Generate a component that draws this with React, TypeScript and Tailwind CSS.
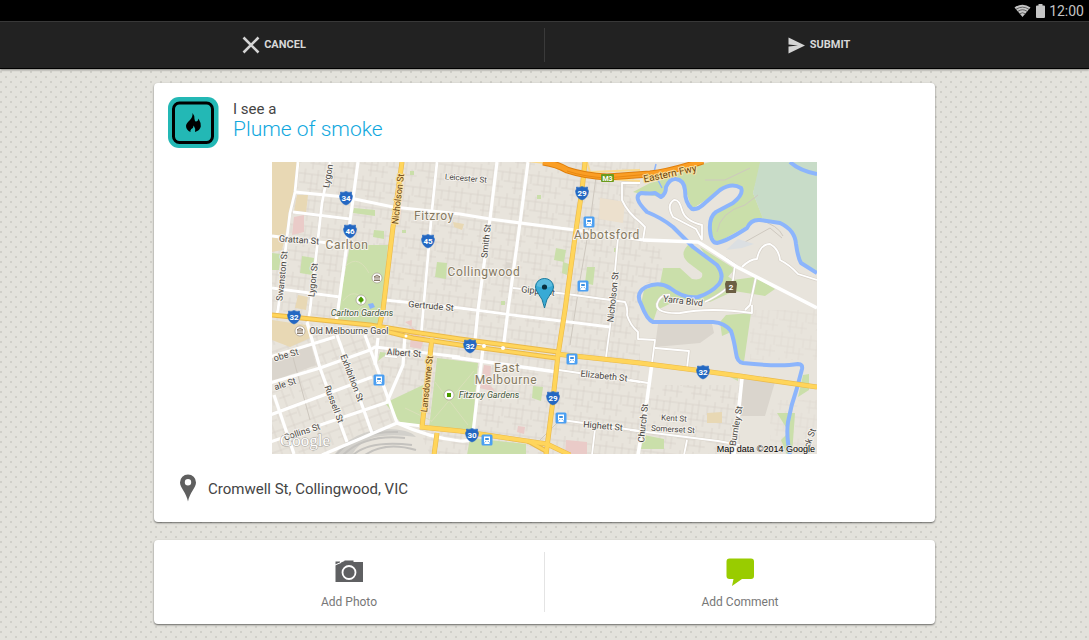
import React from 'react';

type Pt = [number, number];

const MINOR_ROADS = [
  'M293 212L350 219', 'M272 236L320 242L345 245', 'M272 288L340 297', 'M298 162L295 192L290 213L278 310L276 316',
  'M330 162L322 203L310 310L308 322', 'M437 162L432 210L421 336', 'M385 300L460 308L520 316L610 327',
];

const MAIN_ROADS = [
  'M358 162L338 310L336 322', 'M295 192L345 197L393 207L460 214L490 219L575 230L643 240',
  'M497 162L490 219L478 310L475 340L483 348L473 433', 'M528 162L520 223L508 310L503 350',
];

const SMALL_ROADS = [
  'M618 238L613 293L610 327L606 357', 'M513 288L567 294L625 302Q628 308 627 315Q630 325 638 332V339L655 340L652 363',
  'M640 183H622V200Q628 213 640 222L645 227L643 240', 'M655 348L689 351L687 368', 'M559 370L640 382',
  'M562 420L640 431', 'M595 429L592 455', 'M630 430L718 441L740 445', 'M687 440L684 455', 'M630 380L648 383',
  'M752 305V313Q710 307 680 313Q656 314 657 304Q660 294 670 295', 'M745 310L750 305L756 277',
  'M742 267Q750 259 757 259Q760 244 770 244Q779 249 780 260Q790 265 798 274L817 280',
  'M702 240V225Q685 221 682 210Q679 199 674 200Q666 205 673 217L696 229L702 240', 'M725 258L735 265L733 280Q728 291 705 302',
  'M385 356L397 357',
];

const CITY_ROADS = [
  'M270 357L335 337', 'M270 383L320 368L370 350L375 347L460 357', 'M270 415L372 377', 'M270 442L388 402',
  'M322 455L397 423L422 426', 'M307 322L320 368L347 442', 'M337 335L372 433', 'M365 335L376 365L397 423',
  'M274 395L294 454', 'M405 335L403 365L387 402', 'M378 338L375 365', 'M397 423Q430 438 460 441Q473 442 475 434',
];

const SHIELDS: { x: number; y: number; n: string }[] = [
  { x: 346, y: 198, n: '34' }, { x: 350, y: 231, n: '46' }, { x: 428, y: 241, n: '45' }, { x: 582, y: 193, n: '29' },
  { x: 294, y: 317, n: '32' }, { x: 470, y: 346, n: '32' }, { x: 553, y: 398, n: '29' }, { x: 472, y: 435, n: '30' },
  { x: 703, y: 372, n: '32' },
];

const STATIONS: Pt[] = [[589, 222], [583, 286], [572, 359], [561, 418], [487, 440], [379, 380]];

const STREETS: { x: number; y: number; r: number; t: string; s?: number; brown?: boolean }[] = [
  { x: 328, y: 176, r: -80, t: 'Lygon' }, { x: 398, y: 199, r: -83, t: 'Nicholson St', brown: true },
  { x: 466, y: 178, r: 5, t: 'Leicester St', s: 8 }, { x: 299, y: 240, r: 4, t: 'Grattan St' },
  { x: 282, y: 276, r: -84, t: 'Swanston St' }, { x: 313, y: 280, r: -84, t: 'Lygon St' },
  { x: 486, y: 241, r: -84, t: 'Smith St' }, { x: 431, y: 306, r: 5, t: 'Gertrude St' },
  { x: 538, y: 291, r: 6, t: 'Gipps St' }, { x: 613, y: 297, r: -84, t: 'Nicholson St' },
  { x: 670, y: 174, r: -12, t: 'Eastern Fwy', brown: true, s: 10 }, { x: 683, y: 301, r: 7, t: 'Yarra Blvd' },
  { x: 286, y: 355, r: -16, t: 'obe St' }, { x: 285, y: 384, r: -18, t: 'ale St' }, { x: 302, y: 432, r: -18, t: 'Collins St' },
  { x: 352, y: 378, r: 69, t: 'Exhibition St' }, { x: 334, y: 404, r: 69, t: 'Russell St' },
  { x: 404, y: 353, r: 4, t: 'Albert St' }, { x: 427, y: 384, r: -84, t: 'Lansdowne St', brown: true },
  { x: 604, y: 376, r: 6, t: 'Elizabeth St' }, { x: 603, y: 426, r: 5, t: 'Highett St' },
  { x: 643, y: 423, r: -84, t: 'Church St' }, { x: 736, y: 426, r: -80, t: 'Burnley St' },
  { x: 674, y: 418, r: 3, t: 'Kent St', s: 8 }, { x: 673, y: 429, r: 3, t: 'Somerset St', s: 8 },
  { x: 810, y: 438, r: -70, t: 'ck St' },
];

const SUBURBS: { x: number; y: number; t: string }[] = [
  { x: 434, y: 220, t: 'Fitzroy' }, { x: 347, y: 249, t: 'Carlton' }, { x: 607, y: 239, t: 'Abbotsford' },
  { x: 484, y: 276, t: 'Collingwood' }, { x: 507, y: 372, t: 'East' }, { x: 506, y: 384, t: 'Melbourne' },
];

const RIVER =
  'M790 455Q786 435 788 422Q791 405 797 388L802 369Q803 364 798 364Q780 367 743 363Q737 362 736 353Q734 340 731 331Q725 323 713 322L653 322Q647 320 641 304Q635 293 646 287Q659 281 670 288Q684 299 698 297Q711 293 719 284Q725 276 717 265L693 247L673 227Q662 218 647 212Q632 197 641 193Q651 194 655 193L661 197Q666 194 666 187Q670 178 676 179Q684 180 685 190Q685 203 692 209Q698 210 705 203L720 190Q732 182 741 188Q744 194 733 203L716 212Q709 217 710 230Q711 243 717 243Q727 241 747 228Q751 219 760 220L780 223Q795 230 796 244Q798 258 801 263L817 273';

function Lines({ paths, width, color = '#fff' }: { paths: string[]; width: number; color?: string }) {
  return (
    <g fill="none" stroke={color} strokeWidth={width} strokeLinejoin="round">
      {paths.map((d) => <path key={d} d={d} />)}
    </g>
  );
}

function CityMap() {
  return (
    <svg viewBox="272 162 545 292" role="img" aria-label="Map of Collingwood" className="block h-auto w-full font-[Roboto,sans-serif]">
      <defs>
        <pattern id="lanes" width="29" height="26" patternUnits="userSpaceOnUse" patternTransform="rotate(7)">
          <path d="M0 5H29M0 14H18M9 20H29M5 0V14M12 5V26M18 0V20M24 14V26M27 5V14" fill="none" stroke="#d8d2ca" strokeWidth="0.8" />
        </pattern>
        <pattern id="cityLanes" width="21" height="19" patternUnits="userSpaceOnUse" patternTransform="rotate(-20)">
          <path d="M0 6H21M0 14H12M5 0V19M14 6V19" fill="none" stroke="#d8d2ca" strokeWidth="0.8" />
        </pattern>
      </defs>
      <rect x="272" y="162" width="545" height="293" fill="#e8e4dc" />
      <path d="M272 162H640V186L625 190L640 212V385H272Z" fill="url(#lanes)" />
      <path d="M400 385H740V455H430Z" fill="url(#lanes)" />
      <path d="M640 240L662 250V280L640 285Z" fill="url(#lanes)" />
      <path d="M750 310H817V360H750ZM770 400H817V455H770Z" fill="url(#lanes)" opacity="0.5" />
      <path d="M272 320L370 328L397 423L322 455H272Z" fill="#e8e4dc" />
      <path d="M272 320L370 328L397 423L322 455H272Z" fill="url(#cityLanes)" />

      <g fill="#e8d8b4">
        <path d="M272 162H300L295 192L290 213L282 250L272 252ZM297 195H308L306 213L294 211Z" />
        <path d="M272 320L306 325L310 338L290 347L272 340ZM298 295L308 297L306 310L295 308Z" />
        <path d="M707 413L722 412V423H707ZM453 222L464 224L462 230L454 227Z" />
      </g>
      <path d="M600 198L625 202L623 223L599 219Z" fill="#ece0cd" />
      <path d="M294 217L304 215V232L292 235ZM405 322L412 320L410 347L421 349L425 336ZM484 365L491 366L490 385L496 392L480 388ZM462 342L478 345V350L463 349ZM566 440L587 442V455H565ZM518 426L525 427L524 434L517 432Z" fill="#eacbc8" />
      <path d="M658 324L712 324L714 333L700 343L655 347ZM742 378L775 382L765 416L741 416ZM272 357L311 345L316 365L284 377L272 380ZM506 262L512 263L510 280L504 278Z" fill="#dad5cd" />

      <path d="M633 192L650 183L662 180L702 164L710 162H762L753 193L763 218Q750 222 745 227L717 243L710 232L713 215L741 197V186H728L692 209L683 182L672 179L661 197L641 194Z" fill="#cadfaa" />
      <path d="M713 215L741 194V188L728 186L692 209L702 226V240L712 247L710 230Z" fill="#e8e4dc" />
      <path d="M760 162H817V273L801 263L796 240Q792 227 780 223L763 219L753 193Z" fill="#c8dcc8" />
      <path d="M692 246L722 272L733 280L755 277L775 289L765 296L734 291L710 302L680 299L657 310L653 322L641 304L644 290L660 284L663 268L680 268L692 279Q704 281 702 273L690 264Q678 255 688 245ZM700 247L735 269L724 281L706 256Z" fill="#cadfaa" />
      <path d="M726 315L751 313L744 362L736 356L731 332L722 336L720 322ZM803 375L809 374V390L798 397ZM777 413H795L792 455H787L781 440L789 432ZM730 377H738V381ZM644 435L664 439V449H641Z" fill="#cadfaa" />
      <g fill="#cadfaa">
        <path d="M350 245L388 245L382 310L378 328L337 322L339 305Z" />
        <path d="M437 358L478 363L472 432L429 428ZM385 403L423 385L420 425L400 422ZM470 438L526 444V455H467ZM380 352L388 353L378 361Z" />
        <path d="M354 208L375 210V216L353 213ZM374 230L384 231V239L373 237ZM302 256L314 258L312 275L300 273ZM272 253L281 254L279 270H272ZM437 262L447 263L446 279L435 277Z" />
        <path d="M556 248L566 250L564 262L554 260ZM587 267H595L593 285L585 283ZM563 262L569 264L567 275L562 273ZM533 386L543 387L541 401L532 398ZM410 171h4v4h-4zM537 195h4v4h-4zM402 230h4v3h-4zM501 301h4v4h-4zM614 248h3v4h-3z" />
      </g>
      <path d="M341 272Q356 250 369 273M343 301Q354 286 366 302L350 318M431 422L474 371M435 382L468 425M405 408L432 421" fill="none" stroke="#d9dfb9" strokeWidth="1" />
      <path d="M368 304l5-1 2 4-5 2z" fill="#8ab4f8" />
      <path d="M334 455Q352 431 385 429Q410 429 416 437Q390 433 372 438Q358 443 352 455Z" fill="#d2d0cb" />
      <path d="M336 455Q356 431 398 432M343 455Q365 434 405 438M353 455Q370 440 412 445M365 455Q385 441 416 450" fill="none" stroke="#c4c2be" strokeWidth="2" />
      <path d="M596 177L590 222L579 286L570 345M565 415L540 440M291 350L310 420M745 242L770 228L782 238M705 180L725 180L750 168M717 232Q720 212 745 205L758 195M759 220Q778 225 783 236" fill="none" stroke="#cec8bf" strokeWidth="1" />
      <path d="M726 250L738 239L754 244L742 248Z" fill="#dbdfe2" />

      <path d={RIVER} fill="none" stroke="#8cb5fc" strokeWidth="4" strokeLinejoin="round" />
      <path d="M790 162Q800 171 817 174" fill="none" stroke="#8cb5fc" strokeWidth="4" />
      <path d="M656 164L654 172L662 188" fill="none" stroke="#8cb5fc" strokeWidth="1.5" />

      <Lines paths={[...SMALL_ROADS, ...MINOR_ROADS]} width={3} color="#d8d2c9" />
      <Lines paths={SMALL_ROADS} width={1.8} />
      <Lines paths={MINOR_ROADS} width={2.8} />
      <Lines paths={[...MAIN_ROADS, ...CITY_ROADS]} width={3.2} />
      <Lines paths={['M643 240L698 242Q710 249 737 267L817 308', 'M452 357L557 372', 'M652 363L647 400L638 455', 'M742 378L734 455']} width={3.6} />

      <Lines paths={['M528 161L545 163L560 169', 'M587 162L590 172L640 170', 'M594 178L640 181']} width={2} color="#fbd98a" />
      <Lines paths={['M402 162L393 227L383 310L378 332', 'M585 162L582 190L576 230L565 310L558 355L552 408L546 455', 'M432 338L422 427', 'M272 315L370 325L413 332L460 339L558 352', 'M385 331L413 338L460 345L556 358', 'M556 354L640 363L703 371L740 376L817 387', 'M420 427L460 431L547 444L570 455', 'M437 433L434 455', 'M528 441L546 451']} width={5} color="#eab94a" />
      <Lines paths={['M402 162L393 227L383 310L378 332', 'M585 162L582 190L576 230L565 310L558 355L552 408L546 455', 'M432 338L422 427', 'M420 427L460 431L547 444L570 455', 'M556 354L640 363L703 371L740 376L817 387', 'M437 433L434 455']} width={3.8} color="#ffd55b" />
      <Lines paths={['M272 315L370 325L413 332L460 339L558 352', 'M385 331L413 338L460 345L556 358', 'M528 441L546 451']} width={3} color="#ffd55b" />
      <path d="M543 162Q557 164 567 170Q585 176 607 177L650 174Q670 172 703 161" fill="none" stroke="#e07f0b" strokeWidth="7" />
      <path d="M543 162Q557 164 567 170Q585 176 607 177L650 174Q670 172 703 161" fill="none" stroke="#fa9e25" strokeWidth="5" />
      <path d="M567 171Q585 177 607 178L650 174" fill="none" stroke="#e98913" strokeWidth="1" />
      <g fill="#fff"><circle cx="484" cy="346" r="2" /><circle cx="503" cy="348" r="2" /><circle cx="406" cy="336" r="1.5" /></g>

      <g textAnchor="middle" stroke="#f6f3ee" strokeWidth="2" strokeLinejoin="round" paintOrder="stroke">
        {STREETS.map((s, i) => (
          <text key={i} transform={`translate(${s.x} ${s.y}) rotate(${s.r})`} dy="3" fontSize={s.s ?? 9} fill={s.brown ? '#6b4510' : '#494744'} stroke={s.brown ? '#fbe09a' : '#f6f3ee'}>
            {s.t}
          </text>
        ))}
        {SUBURBS.map((s) => (
          <text key={s.t} x={s.x} y={s.y} fontSize="12" className="tracking-wider" fill="#84785f">{s.t}</text>
        ))}
        <text x="362" y="316" fontSize="9" fontStyle="italic" fill="#42573b">Carlton Gardens</text>
        <text x="489" y="398" fontSize="9" fontStyle="italic" fill="#42573b">Fitzroy Gardens</text>
        <text x="349" y="334" fontSize="9" fill="#494744">Old Melbourne Gaol</text>
      </g>

      {SHIELDS.map((s, i) => (
        <g key={i} transform={`translate(${s.x} ${s.y})`}>
          <path d="M-5.5 -6Q-3 -5 0 -6.5Q3 -5 5.5 -6Q5 -4 6.5 -2Q6 5 0 7Q-6 5 -6.5 -2Q-5 -4 -5.5 -6Z" fill="#2468c2" stroke="#2468c2" strokeWidth="0.6" />
          <text y="2.8" fontSize="8" fontWeight="700" textAnchor="middle" fill="#fff">{s.n}</text>
        </g>
      ))}
      {STATIONS.map(([x, y], i) => (
        <g key={i} transform={`translate(${x} ${y})`}>
          <rect x="-5.5" y="-5.5" width="11" height="11" rx="1.5" fill="#4b9ff2" />
          <path d="M-3 -3.5H3V2.500H-3ZM-3 4L-1.800 2.500H1.800L3 4Z" fill="#fff" />
          <path d="M-1.800 -2H1.800V0H-1.800ZM-1.800 1h1v.8h-1zM.8 1h1v.8h-1z" fill="#3c8fe0" />
        </g>
      ))}
      <rect x="601" y="174" width="13" height="8" rx="1" fill="#6b9b1c" />
      <text x="607.5" y="180.7" fontSize="7" fontWeight="700" textAnchor="middle" fill="#fff">M3</text>
      <path d="M726 281H736L737 284L736 293H726L725 284Z" fill="#6b5e43" />
      <text x="731" y="290" fontSize="8" fontWeight="700" textAnchor="middle" fill="#fff">2</text>

      <g fill="#fff" stroke="#a49a8c" strokeWidth="0.7">
        <circle cx="377" cy="278" r="5" /><circle cx="300" cy="331" r="5" /><circle cx="361" cy="300" r="5" /><circle cx="449" cy="395" r="5" />
      </g>
      <path d="M374 277L377 275L380 277ZM374 280.5H380M375 277.5V280M377 277.5V280M379 277.5V280M297 330L300 328L303 330ZM297 333.5H303M298 330.5V333M300 330.5V333M302 330.5V333" fill="none" stroke="#6b5640" strokeWidth="0.8" />
      <path d="M361 296.500Q356 301 360.500 302V303.500H361.500V302Q366 301 361 296.500ZM447 393h4v4h-4z" fill="#4a9a00" />

      <g>
        <path d="M544.500 308Q543 299 538 293Q535.500 290 535.500 287A9 8.500 0 0 1 553.500 287Q553.500 290 551 293Q546 299 544.500 308Z" fill="#38aad5" stroke="#17789c" strokeWidth="1" />
        <path d="M536.500 286A8 7 0 0 1 552.500 286Q545 289 536.500 286Z" fill="#7dcdea" opacity="0.5" />
        <circle cx="544.500" cy="287" r="2.600" fill="#09303f" />
      </g>
      <text x="280" y="446" fontSize="17" fontFamily="Liberation Serif, serif" fill="#fff" stroke="#aaa69f" strokeWidth="1" paintOrder="stroke">Google</text>
      <text x="815" y="452" fontSize="9" textAnchor="end" fontFamily="Liberation Sans, sans-serif" fill="#000" stroke="#eeeae4" strokeWidth="1.5" paintOrder="stroke">Map data ©2014 Google</text>
    </svg>
  );
}

function StatusBar() {
  return (
    <div className="flex h-[21px] items-center justify-end bg-black pr-[5px] text-[#c4c4c4]">
      <svg viewBox="0 0 17 13" className="mr-[5px] h-[13px] w-[17px]" aria-hidden="true">
        <path d="M8.500 13L0.500 3.500Q8.500 -2 16.500 3.500Z" fill="currentColor" />
        <path d="M2 5.300Q8.500 1 15 5.300M3.600 7.500Q8.500 4 13.400 7.500M5.500 9.800Q8.500 7.700 11.500 9.800" fill="none" stroke="#333" strokeWidth="0.7" />
      </svg>
      <svg viewBox="0 0 9 14" className="mr-1 h-[14px] w-[9px]" aria-hidden="true">
        <path d="M2.500 0H6.500V1.500H8Q9 1.500 9 2.500V13Q9 14 8 14H1Q0 14 0 13V2.500Q0 1.500 1 1.500H2.500Z" fill="currentColor" />
      </svg>
      <span className="text-[14px] leading-5">12:00</span>
    </div>
  );
}

function ActionBar() {
  const button = 'flex flex-1 items-center justify-center pl-1 text-[11px] font-bold leading-4 text-[#d8d8d8]';
  return (
    <header className="flex h-12 border-t border-b border-t-[#383838] border-b-black bg-[#222] shadow-[0_1px_2px_rgba(0,0,0,0.4)]">
      <button type="button" className={button}>
        <svg viewBox="0 0 18 18" className="mr-1 size-[18px]" aria-hidden="true">
          <path d="M1.500 1.500L16.500 16.500M16.500 1.500L1.500 16.500" stroke="#d4d4d4" strokeWidth="2.600" />
        </svg>
        CANCEL
      </button>
      <span className="my-[6px] w-px bg-[#3a3a3a]" />
      <button type="button" className={button}>
        <svg viewBox="0 0 17 17" className="mr-[5px] size-[17px]" aria-hidden="true">
          <path d="M0.500 0.500L17 8.500L0.500 16.500V9.500L10 8.500L0.500 7.500Z" fill="#d4d4d4" />
        </svg>
        SUBMIT
      </button>
    </header>
  );
}

function HazardIcon() {
  return (
    <svg viewBox="0 0 51 51" className="size-[51px] shrink-0" aria-hidden="true">
      <rect width="50.500" height="51" rx="11" fill="#23b8b5" />
      <rect x="5.500" y="6" width="39" height="39.500" rx="6" fill="#23b8b5" stroke="#000" strokeWidth="3" />
      <path d="M24.500 16Q26.700 18.500 26.500 22Q27 25 28 24.500Q30 24.500 30.500 21.500Q33 25.500 32.800 29.500Q32 33.500 27 35Q27.800 31.500 25.700 28.500Q25.500 31 23.300 32Q22 33.500 22.500 35Q18.200 33 18 29Q18 26.500 21.500 23.500Q25 20 24.500 16Z" fill="#000" />
    </svg>
  );
}

const card = 'rounded-[4px] bg-white shadow-[0_1px_2px_rgba(0,0,0,0.55)]';

export default function App() {
  const action = 'flex flex-1 flex-col items-center justify-center pt-1 text-[12px] leading-4 text-[#777]';
  return (
    <div className="min-h-screen bg-[#e3e2dc] bg-[radial-gradient(circle_at_1px_2px,#d0cfc9_1px,transparent_1px),radial-gradient(circle_at_6px_7px,#d0cfc9_1px,transparent_1px)] bg-[size:10px_10px] font-[Roboto,sans-serif]">
      <StatusBar />
      <ActionBar />
      <main className="mx-auto flex max-w-[781px] flex-col gap-[18px] py-[14px]">
        <section className={`${card} px-[14px] pt-[14px] pb-5`}>
          <div className="flex gap-[14px]">
            <HazardIcon />
            <div className="pt-1">
              <p className="text-[15px] leading-4 text-[#444]">I see a</p>
              <h1 className="text-[21px] font-light leading-[24px] text-[#11a8de]">Plume of smoke</h1>
            </div>
          </div>
          <div className="mx-auto mt-[14px] max-w-[545px]">
            <CityMap />
          </div>
          <div className="mt-5 flex items-center gap-3 pl-3">
            <svg viewBox="0 0 16 28" className="h-7 w-4" aria-hidden="true">
              <path d="M8 0.500A8 8 0 0 1 16 8.500C16 13.500 9.500 19 8 27.500C6.500 19 0 13.500 0 8.500A8 8 0 0 1 8 0.500ZM8 5A3.200 3.200 0 1 0 8 11.400A3.200 3.200 0 1 0 8 5Z" fill="#5f5f5f" fillRule="evenodd" />
            </svg>
            <p className="pt-[2px] text-[15px] leading-5 text-[#444]">Cromwell St, Collingwood, VIC</p>
          </div>
        </section>
        <section className={`${card} flex h-[84px]`}>
          <button type="button" className={action}>
            <svg viewBox="0 0 28 28" className="mb-2 size-7" aria-hidden="true">
              <path d="M0.500 3.500H5V5L9.500 3V2.500H18.500V4H28V24H0.500Z" fill="#5f6062" />
              <path d="M0 7L6 4.500" stroke="#fff" strokeWidth="1" />
              <circle cx="14" cy="14.500" r="6.500" fill="none" stroke="#fff" strokeWidth="1.800" />
            </svg>
            Add Photo
          </button>
          <span className="my-3 w-px bg-[#e4e4e4]" />
          <button type="button" className={action}>
            <svg viewBox="0 0 28 28" className="mb-2 size-7" aria-hidden="true">
              <path d="M3.500 0.500H25Q28 0.500 28 3.500V18Q28 21 25 21H16L6 28L7.500 21H3.500Q0.500 21 0.500 18V3.500Q0.500 0.500 3.500 0.500Z" fill="#99cc00" />
            </svg>
            Add Comment
          </button>
        </section>
      </main>
    </div>
  );
}
